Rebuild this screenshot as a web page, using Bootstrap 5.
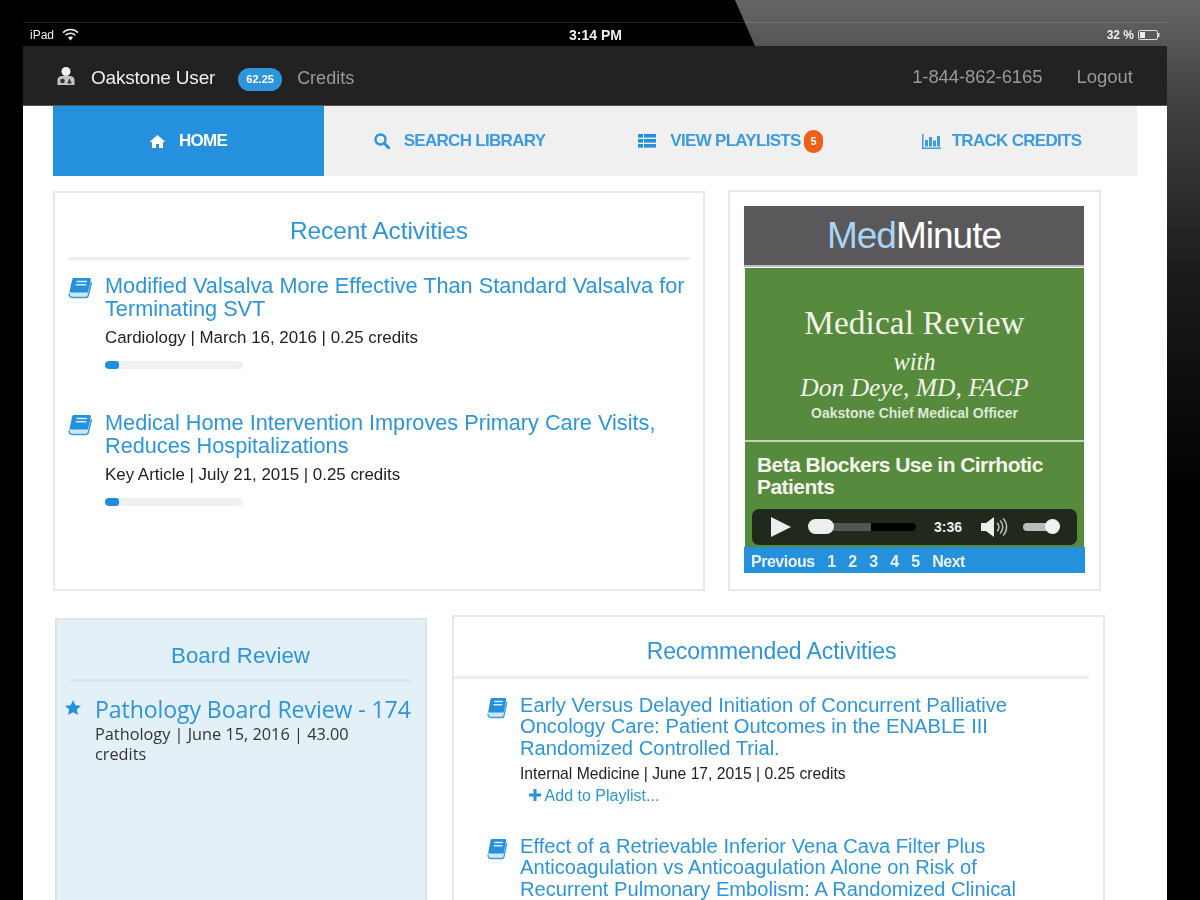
<!DOCTYPE html>
<html lang="en">
<head>
<meta charset="UTF-8">
<meta name="viewport" content="width=device-width, initial-scale=1.0">
<title>Oakstone</title>
<link href="https://cdn.jsdelivr.net/npm/bootstrap@5.3.3/dist/css/bootstrap.min.css" rel="stylesheet">
<style>
  html, body { height: 900px; overflow: hidden; }
  body {
    background: #000;
    font-family: "Liberation Sans", Arial, sans-serif;
    position: relative;
  }
  /* the lit corner of the tablet behind the screen */
  body::before {
    content: "";
    position: absolute;
    inset: 0;
    background: linear-gradient(to bottom, #666 0, #444 10%, #1c1c1c 30%, #000 55%);
    clip-path: polygon(735px 0, 1200px 0, 1200px 900px, 755px 900px, 755px 46px);
  }
  .tablet {
    position: relative;
    width: 1144px;
    height: 878px;
    margin: 22px 0 0 23px;
    overflow: hidden;
    filter: blur(.7px);
  }
  .status-bar {
    height: 24px;
    padding: 0 7px;
    color: #f0f0f0;
    font-size: 12px;
    font-weight: bold;
    border-top: 1px solid rgba(255, 255, 255, .12);
  }
  .status-bar .ipad-label { font-weight: normal; }
  .clock { margin: 1px 0 0 490px; font-size: 14px; }
  .battery-box { margin-left: auto; }
  .top-bar {
    height: 60px;
    padding: 3px 34px 0 33px;
    background: #222;
    border-bottom: 1px solid #555;
    font-size: 18px;
    color: #999;
  }
  .user-name { color: #eee; font-size: 19px; margin: 3px 23px 0 15px; letter-spacing: -.2px; }
  .credit-pill {
    background: #2d95dc;
    font-size: 11px;
    padding: 6px 7px;
    margin: 4px 15px 0 0;
    width: 44px;
  }
  .credits-label { margin-top: 2px; }
  .phone-no { margin-left: auto; margin-right: 34px; font-size: 18.5px; letter-spacing: -.1px; }
  .logout-link { font-size: 18.5px; }
  .page-body { background: #fff; height: 794px; padding: 0 30px; }
  .main-nav { width: 1084px; background: #f0f0f0; height: 70px; }
  .main-nav .nav-link {
    height: 70px;
    padding: 0;
    display: flex;
    align-items: center;
    justify-content: center;
    color: #3d9be0;
    font-size: 17px;
    font-weight: bold;
    letter-spacing: -.7px;
    border-radius: 0;
  }
  .main-nav .nav-link svg { margin-right: 14px; }
  .main-nav .nav-link .chart-icon { margin-right: 11px; }
  .main-nav .nav-link.active { background: #2590dc; color: #fff; }
  .count-pill {
    background: #ef5f17;
    font-size: 11px;
    padding: 6px 5px;
    margin-left: 3px;
    width: 19px;
    border-radius: 9px;
  }
  .top-row { margin-top: 15px; }
  .panel-box { border: 2px solid #e8e8e8; border-radius: 0; background: #fff; }
  .recent-box { width: 652px; height: 400px; padding: 0 13px; }
  .panel-title {
    color: #2d95dc;
    text-align: center;
    font-weight: normal;
    margin: 0;
    border-bottom: 3px solid #eee;
  }
  .recent-box .panel-title { font-size: 24.5px; height: 67px; line-height: 76px; letter-spacing: -.1px; }
  .activity-row { display: flex; }
  .recent-box .activity-row { margin-top: 14px; height: 137px; }
  .recent-box .activity-row + .activity-row { margin-top: 0; }
  .book-icon { flex: none; }
  .recent-box .book-icon { margin: 3px 12px 0 0; }
  .activity-link { color: #2d95dc; text-decoration: none; display: block; }
  .recent-box .activity-link { font-size: 21.7px; line-height: 23px; }
  .recent-box .activity-meta { font-size: 16.9px; color: #222; margin-top: 8px; line-height: 20px; }
  .thin-progress { width: 138px; height: 8px; background: #f0f0f0; margin-top: 13px; border-radius: 4px; }
  .thin-progress .progress-bar { background: #1f8ede; border-radius: 3px; }

  .med-box { width: 373px; height: 401px; margin-left: 23px; margin-top: -1px; padding: 14px 14px 0; }
  .med-head {
    height: 59px;
    background: #5a585a;
    color: #fff;
    font-size: 37px;
    letter-spacing: -1px;
    text-align: center;
    line-height: 60px;
    margin-right: 1px;
    border-bottom: 2px solid #bbb;
    box-sizing: content-box;
  }
  .med-head span { color: #a9d4f5; }
  .med-green { background: #568a3c; color: #f3f3ea; margin: 1px 1px 0; }
  .med-slide {
    height: 174px;
    padding-top: 38px;
    text-align: center;
    font-family: "Liberation Serif", "Times New Roman", serif;
    border-bottom: 2px solid #c3d3b9;
  }
  .med-slide div { line-height: 1; }
  .slide-title { font-size: 33.3px; letter-spacing: .1px; }
  .slide-with { font-size: 24.5px; font-style: italic; margin-top: 11px; }
  .slide-name { font-size: 25.5px; font-style: italic; margin-top: 0; }
  .slide-role {
    font-family: "Liberation Sans", Arial, sans-serif;
    font-size: 14px;
    font-weight: bold;
    color: #dfe8d8;
    margin-top: 6px;
  }
  .med-clip { height: 105px; padding: 12px 7px 0 7px; }
  .clip-title { font-size: 21px; font-weight: bold; line-height: 22px; letter-spacing: -.55px; padding-left: 5px; color: #f5f5ee; }
  .player-bar {
    height: 36px;
    background: #20291c;
    border-radius: 7px;
    margin-top: 11px;
    padding: 0 8px 0 18px;
    color: #eee;
    font-size: 14px;
    font-weight: bold;
  }
  .seek-track {
    width: 106px;
    height: 8px;
    margin: 0 18px 0 19px;
    border-radius: 4px;
    background: linear-gradient(to right, #555 0, #555 58%, #000 58%);
    position: relative;
  }
  .seek-knob {
    position: absolute;
    left: -2px;
    top: -4px;
    width: 26px;
    height: 15px;
    border-radius: 8px;
    background: #eee;
  }
  .speaker-icon { margin-left: 18px; }
  .volume-track { width: 36px; height: 8px; margin-left: 14px; border-radius: 4px; background: #bbb; position: relative; }
  .volume-knob { position: absolute; right: -1px; top: -4px; width: 15px; height: 15px; border-radius: 50%; background: #f2f2f2; }
  .pager {
    height: 26px;
    width: 341px;
    margin: 0;
    background: #2590dc;
    padding: 3px 0 0 7px;
    font-size: 16px;
    font-weight: bold;
    letter-spacing: -.5px;
  }
  .pager a { color: #e8f3fb; text-decoration: none; margin-right: 12.6px; }

  .lower-row { margin-top: 24px; }
  .board-box {
    width: 372px;
    height: 320px;
    margin: 3px 0 0 2px;
    background: #e4f0f8;
    border: 2px solid #dde4e8;
    padding: 0 14px 0 13px;
    flex: none;
  }
  .board-box .panel-title { font-size: 22.3px; height: 62px; line-height: 72px; border-bottom-color: #d9e5ec; }
  .board-row { display: flex; margin-top: 12px; }
  .board-row svg { flex: none; margin: 6px 14px 0 -5px; }
  .board-link {
    font-family: "Open Sans", sans-serif;
    font-size: 23.1px;
    line-height: 30px;
    color: #2d95dc;
    text-decoration: none;
    white-space: nowrap;
    display: block;
    letter-spacing: -.1px;
  }
  .board-meta { font-family: "Open Sans", sans-serif; font-size: 16.3px; line-height: 20px; color: #333; max-width: 290px; }
  .rec-box { width: 653px; height: 320px; margin-left: 25px; padding: 0 14px 0 0; }
  .rec-box .panel-title { font-size: 23px; height: 62px; line-height: 68px; letter-spacing: -.1px; }
  .rec-box .activity-row { padding-left: 33px; margin-top: 16px; height: 141px; }
  .rec-box .activity-row + .activity-row { margin-top: 0; }
  .rec-box .book-icon { margin: 2px 12px 0 0; }
  .rec-box .activity-link { font-size: 20.15px; line-height: 21.3px; max-width: 505px; }
  .rec-box .activity-meta { font-size: 15.7px; color: #222; margin-top: 6px; line-height: 18px; }
  .add-link { color: #2d95dc; font-size: 16px; text-decoration: none; margin: 4px 0 0 9px; display: block; line-height: 18px; }
</style>
</head>
<body>
<svg class="d-none">
  <symbol id="book" viewBox="0 0 25 22" preserveAspectRatio="none">
    <path d="M23.500 5l-3.200 13.500c-.3 1.200-1 2-2.300 2H4.500c-2.500 0-3.700-1.800-3.200-4" fill="#cfe7f8" stroke="#3d9be0" stroke-width="1.500"/>
    <path d="M6 1h15.500c1 0 1.600.8 1.300 1.800L19.800 15.500H1.300L4.100 2.800C4.400 1.600 5 1 6 1z" fill="#2590dc"/>
    <path d="M8.500 4.500h10.500M7.800 7.800h10.500" stroke="#d5ebfa" stroke-width="1.500"/>
  </symbol>
</svg>
<div class="tablet">
  <div class="status-bar d-flex align-items-center">
    <span class="ipad-label">iPad</span>
    <svg class="ms-2" width="17" height="13" viewBox="0 0 17 13"><g fill="none" stroke="#eee" stroke-width="1.6"><path d="M1 4.600a10.500 10.500 0 0 1 15 0"/><path d="M3.600 7.300a6.800 6.800 0 0 1 9.800 0"/></g><path d="M6 9.600a3.400 3.400 0 0 1 5 0L8.500 12.400z" fill="#eee"/></svg>
    <span class="clock">3:14 PM</span>
    <span class="battery-box d-flex align-items-center">32 %
      <svg class="ms-1" width="22" height="10" viewBox="0 0 22 10"><rect x=".5" y=".5" width="19" height="9" rx="1.500" fill="none" stroke="#ddd"/><rect x="2" y="2" width="5" height="6" fill="#eee"/><rect x="20" y="3" width="1.500" height="4" fill="#ddd"/></svg>
    </span>
  </div>

  <div class="top-bar d-flex align-items-center">
    <svg width="20" height="20" viewBox="0 0 20 20"><circle cx="10" cy="4.500" r="4.500" fill="#f2f2f2"/><path d="M1.500 18v-5c0-2.500 2-4 5-4h7c3 0 5 1.500 5 4v5z" fill="#c4c4c4"/><circle cx="6.500" cy="14" r="2.300" fill="#333"/><path d="M13.500 11.500l2.300 5h-4.600z" fill="#333"/></svg>
    <span class="user-name">Oakstone User</span>
    <span class="badge rounded-pill credit-pill">62.25</span>
    <span class="credits-label">Credits</span>
    <span class="phone-no">1-844-862-6165</span>
    <span class="logout-link">Logout</span>
  </div>

  <div class="page-body">
    <ul class="nav nav-justified main-nav">
      <li class="nav-item"><a class="nav-link active" href="#">
        <svg width="15" height="13" viewBox="0 0 15 13"><path d="M7.500 0L15 6.500l-1 1-1-.9V13H9V9H6v4H2V6.600l-1 .9-1-1L7.500 0z" fill="#fff"/></svg>HOME</a></li>
      <li class="nav-item"><a class="nav-link" href="#">
        <svg width="16" height="16" viewBox="0 0 16 16"><circle cx="6.500" cy="6.500" r="5" fill="none" stroke="#2d95dc" stroke-width="2.400"/><path d="M10.200 10.200L15 15" stroke="#2d95dc" stroke-width="3" stroke-linecap="round"/></svg>SEARCH LIBRARY</a></li>
      <li class="nav-item"><a class="nav-link" href="#">
        <svg width="18" height="14" viewBox="0 0 18 14" fill="#2590dc"><rect width="5" height="3.600"/><rect x="6" width="12" height="3.600"/><rect y="5" width="5" height="3.600"/><rect x="6" y="5" width="12" height="3.600"/><rect y="10" width="5" height="3.600"/><rect x="6" y="10" width="12" height="3.600"/></svg>VIEW PLAYLISTS<span class="badge count-pill">5</span></a></li>
      <li class="nav-item"><a class="nav-link" href="#">
        <svg class="chart-icon" width="19" height="15" viewBox="0 0 19 15" fill="#3d9be0"><rect y="0" width="1.500" height="15"/><rect y="13.500" width="19" height="1.500"/><rect x="3" y="6" width="3" height="6.500"/><rect x="7" y="3" width="3" height="9.500"/><rect x="11" y="6.500" width="3" height="6"/><rect x="15" y="2" width="3" height="10.500"/></svg>TRACK CREDITS</a></li>
    </ul>

    <div class="d-flex top-row">
      <div class="panel-box recent-box">
        <h2 class="panel-title">Recent Activities</h2>
        <div class="activity-row">
          <svg class="book-icon" width="25" height="22"><use href="#book"/></svg>
          <div>
            <a class="activity-link" href="#">Modified Valsalva More Effective Than Standard Valsalva for Terminating SVT</a>
            <div class="activity-meta">Cardiology | March 16, 2016 | 0.25 credits</div>
            <div class="progress thin-progress"><div class="progress-bar" style="width: 10%"></div></div>
          </div>
        </div>
        <div class="activity-row">
          <svg class="book-icon" width="25" height="22"><use href="#book"/></svg>
          <div>
            <a class="activity-link" href="#">Medical Home Intervention Improves Primary Care Visits, Reduces Hospitalizations</a>
            <div class="activity-meta">Key Article | July 21, 2015 | 0.25 credits</div>
            <div class="progress thin-progress"><div class="progress-bar" style="width: 10%"></div></div>
          </div>
        </div>
      </div>

      <div class="panel-box med-box">
        <div class="med-head"><span>Med</span>Minute</div>
        <div class="med-green">
          <div class="med-slide">
            <div class="slide-title">Medical Review</div>
            <div class="slide-with">with</div>
            <div class="slide-name">Don Deye, MD, FACP</div>
            <div class="slide-role">Oakstone Chief Medical Officer</div>
          </div>
          <div class="med-clip">
            <div class="clip-title">Beta Blockers Use in Cirrhotic Patients</div>
            <div class="player-bar d-flex align-items-center">
              <svg width="21" height="22" viewBox="0 0 21 22"><path d="M1 1l20 10L1 21z" fill="#eee"/></svg>
              <div class="seek-track"><div class="seek-knob"></div></div>
              <span>3:36</span>
              <svg class="speaker-icon" width="29" height="22" viewBox="0 0 29 22"><path d="M1 7h5l8-6v20l-8-6H1z" fill="#eee"/><g fill="none" stroke="#bbb" stroke-width="1.600"><path d="M17 7a5 5 0 0 1 0 8"/><path d="M20 4.500a9 9 0 0 1 0 13"/><path d="M23 2.500a12 12 0 0 1 0 17"/></g></svg>
              <div class="volume-track"><div class="volume-knob"></div></div>
            </div>
          </div>
        </div>
        <div class="pager d-flex align-items-center">
          <a href="#">Previous</a><a href="#">1</a><a href="#">2</a><a href="#">3</a><a href="#">4</a><a href="#">5</a><a href="#">Next</a>
        </div>
      </div>
    </div>

    <div class="d-flex align-items-start lower-row">
      <div class="board-box">
        <h2 class="panel-title">Board Review</h2>
        <div class="board-row">
          <svg width="16" height="15" viewBox="0 0 16 15"><path d="M8 0l2.400 5.200 5.600.6-4.200 3.700 1.200 5.500L8 12.200 3 15l1.200-5.500L0 5.800l5.600-.6z" fill="#2590dc"/></svg>
          <div>
            <a class="board-link" href="#">Pathology Board Review - 174</a>
            <div class="board-meta">Pathology | June 15, 2016 | 43.00 credits</div>
          </div>
        </div>
      </div>

      <div class="panel-box rec-box">
        <h2 class="panel-title">Recommended Activities</h2>
        <div class="activity-row">
          <svg class="book-icon" width="21" height="22"><use href="#book"/></svg>
          <div>
            <a class="activity-link" href="#">Early Versus Delayed Initiation of Concurrent Palliative Oncology Care: Patient Outcomes in the ENABLE III Randomized Controlled Trial.</a>
            <div class="activity-meta">Internal Medicine | June 17, 2015 | 0.25 credits</div>
            <a class="add-link" href="#"><svg class="align-baseline" width="12" height="12" viewBox="0 0 12 12"><path d="M6 0v12M0 6h12" stroke="#2590dc" stroke-width="3"/></svg> Add to Playlist...</a>
          </div>
        </div>
        <div class="activity-row">
          <svg class="book-icon" width="21" height="22"><use href="#book"/></svg>
          <div>
            <a class="activity-link" href="#">Effect of a Retrievable Inferior Vena Cava Filter Plus Anticoagulation vs Anticoagulation Alone on Risk of Recurrent Pulmonary Embolism: A Randomized Clinical</a>
          </div>
        </div>
      </div>
    </div>
  </div>
</div>
<script src="https://cdn.jsdelivr.net/npm/bootstrap@5.3.3/dist/js/bootstrap.bundle.min.js"></script>
</body>
</html>
